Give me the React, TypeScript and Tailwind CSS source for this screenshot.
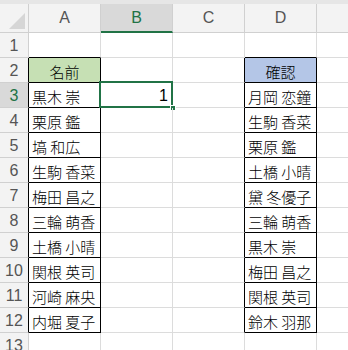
import React from 'react'

const leftNames = ['黒木 崇', '栗原 鑑', '塙 和広', '生駒 香菜', '梅田 昌之', '三輪 萌香', '土橋 小晴', '関根 英司', '河崎 麻央', '内堀 夏子']
const rightNames = ['月岡 恋鐘', '生駒 香菜', '栗原 鑑', '土橋 小晴', '黛 冬優子', '三輪 萌香', '黒木 崇', '梅田 昌之', '関根 英司', '鈴木 羽那']

const font = { fontFamily: '"Noto Sans CJK JP", "Liberation Sans", sans-serif' }

const App = () => {
  const rows = Array.from({ length: 13 }, (_, i) => i + 1)

  return (
    <div className="w-[348px] h-[350px] overflow-hidden bg-white text-black select-none" style={font}>
      <div className="h-[4px] bg-[#e6e6e6]"></div>
      {/* column headers */}
      <div className="flex h-[29px] bg-[#f3f3f3] text-[#555] text-[16px] font-['Liberation_Sans']">
        <div className="relative w-[29px] shrink-0 border-r border-b border-[#d0d0d0]">
          <div className="absolute right-[3px] bottom-[3px] w-0 h-0 border-l-[16px] border-l-transparent border-b-[16px] border-b-[#d6d6d6]"></div>
        </div>
        <div className="w-[72px] shrink-0 flex items-center justify-center border-r border-b border-[#d0d0d0]">A</div>
        <div className="w-[72px] shrink-0 flex items-center justify-center border-r border-[#d0d0d0] border-b-2 border-b-[#217346] bg-[#d9d9d9] text-[#217346]">B</div>
        <div className="w-[72px] shrink-0 flex items-center justify-center border-r border-b border-[#d0d0d0]">C</div>
        <div className="w-[72px] shrink-0 flex items-center justify-center border-r border-b border-[#d0d0d0]">D</div>
        <div className="flex-1 border-b border-[#d0d0d0]"></div>
      </div>
      {rows.map((r) => {
        const inTable = r >= 2 && r <= 12
        const topEdge = r >= 1 && r <= 12
        const a = r === 2 ? '名前' : r >= 3 && r <= 12 ? leftNames[r - 3] : ''
        const d = r === 2 ? '確認' : r >= 3 && r <= 12 ? rightNames[r - 3] : ''
        return (
          <div key={r} className="flex h-[25px]">
            <div
              className={`w-[29px] shrink-0 flex items-center justify-center pt-[1px] text-[16px] font-['Liberation_Sans'] border-b border-b-[#d0d0d0] border-r ${
                inTable ? 'border-r-black' : 'border-r-[#d0d0d0]'
              } ${r === 3 ? 'bg-[#d9d9d9] text-[#217346]' : 'bg-[#f3f3f3] text-[#555]'}`}
            >
              {r}
            </div>
            <div
              className={`w-[72px] shrink-0 flex items-center pt-[2px] text-[15px] font-light leading-none whitespace-pre border-r border-b ${
                inTable ? 'border-r-black' : 'border-r-[#dcdcdc]'
              } ${topEdge ? 'border-b-black' : 'border-b-[#dcdcdc]'} ${
                r === 2 ? 'justify-center bg-[#c6e0b4]' : 'pl-[3px]'
              }`}
            >
              {a}
            </div>
            <div className="relative w-[72px] shrink-0 flex items-center justify-end pr-[4px] pt-[2px] text-[16px] font-['Liberation_Sans'] border-r border-b border-[#dcdcdc]">
              {r === 3 && (
                <>
                  1
                  <div className="absolute -left-[2px] -top-[2px] w-[74px] h-[27px] border-2 border-[#217346]"></div>
                  <div className="absolute -right-[4px] -bottom-[4px] w-[6px] h-[6px] bg-[#217346] border border-white"></div>
                </>
              )}
            </div>
            <div
              className={`w-[72px] shrink-0 border-b border-b-[#dcdcdc] border-r ${
                inTable ? 'border-r-black' : 'border-r-[#dcdcdc]'
              }`}
            ></div>
            <div
              className={`w-[72px] shrink-0 flex items-center pt-[2px] text-[15px] font-light leading-none whitespace-pre border-r border-b ${
                inTable ? 'border-r-black' : 'border-r-[#dcdcdc]'
              } ${topEdge ? 'border-b-black' : 'border-b-[#dcdcdc]'} ${
                r === 2 ? 'justify-center bg-[#b4c6e7]' : 'pl-[3px]'
              }`}
            >
              {d}
            </div>
            <div className="flex-1 border-b border-[#dcdcdc]"></div>
          </div>
        )
      })}
    </div>
  )
}

export default App
